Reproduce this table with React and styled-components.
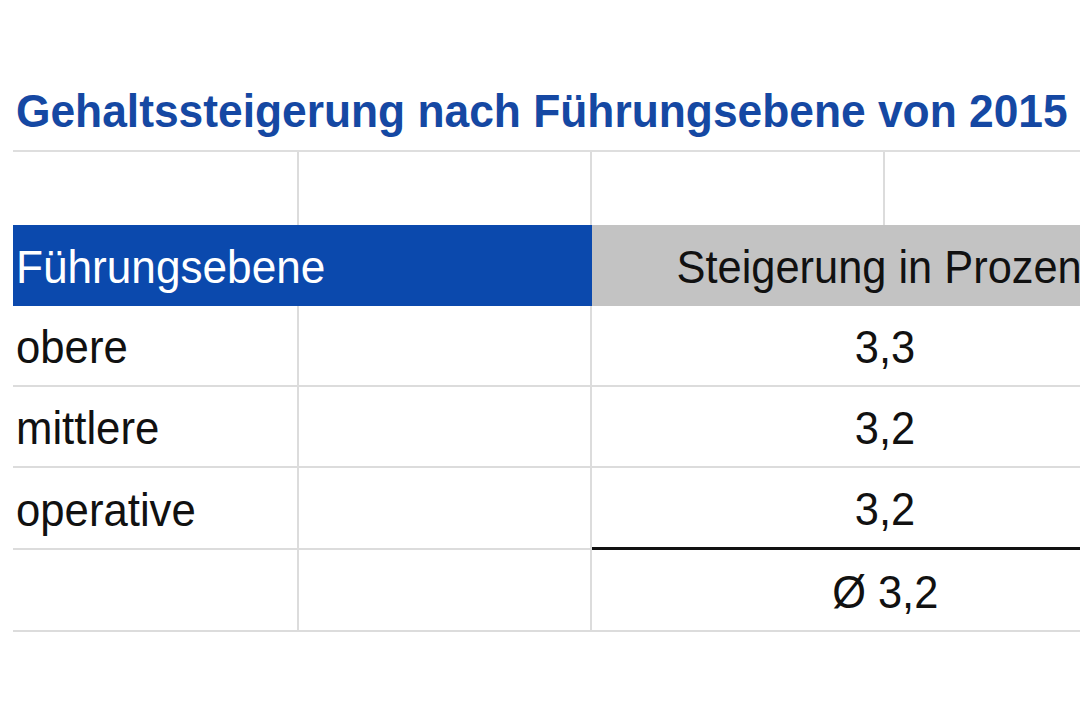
import React from "react";
import styled, { createGlobalStyle } from "styled-components";

const Global = createGlobalStyle`
  html, body { margin: 0; padding: 0; background: #fff; overflow: hidden; }
  body { font-family: "Liberation Sans", Arial, sans-serif; }
`;

const Page = styled.div`
  width: 1080px;
  height: 720px;
  overflow: hidden;
  padding-left: 13px;
  box-sizing: border-box;
`;

const Title = styled.h1`
  margin: 85px 0 13px 0;
  height: 52px;
  font-size: 47px;
  line-height: 52px;
  font-weight: 700;
  color: #1548a3;
  white-space: nowrap;
  padding-left: 3px;
`;

const Squeeze = styled.span`
  display: inline-block;
  white-space: nowrap;
  transform: scaleX(${(p) => p.$s || 0.943});
  transform-origin: ${(p) => (p.$center ? "center" : "left")} center;
`;

const Sheet = styled.div`
  display: grid;
  grid-template-columns: 286px 293px 293px 293px;
  grid-template-rows: 73px 81px 81px 81px 82px 82px;
  border-top: 2px solid #dedede;
  width: 1165px;
`;

const Cell = styled.div`
  box-sizing: border-box;
  display: flex;
  align-items: center;
  justify-content: ${(p) => (p.$center ? "center" : "flex-start")};
  padding-left: ${(p) => (p.$center ? "0" : "3px")};
  padding-top: 3px;
  grid-column: span ${(p) => p.$span || 1};
  font-size: 46px;
  color: #111;
  white-space: nowrap;
  border-right: ${(p) => (p.$noRight ? "none" : "2px solid #dcdcdc")};
  border-bottom: ${(p) =>
    p.$total ? "3px solid #111" : p.$noBottom ? "none" : "2px solid #dcdcdc"};
`;

const HeadCell = styled.div`
  box-sizing: border-box;
  display: flex;
  align-items: center;
  justify-content: ${(p) => (p.$center ? "center" : "flex-start")};
  padding-left: ${(p) => (p.$center ? "0" : "3px")};
  padding-top: 2px;
  grid-column: span 2;
  font-size: 46px;
  white-space: nowrap;
  background: ${(p) => (p.$variant === "blue" ? "#0b49ad" : "#c3c3c3")};
  color: ${(p) => (p.$variant === "blue" ? "#fff" : "#111")};
`;

const rows = [
  { label: "obere", value: "3,3" },
  { label: "mittlere", value: "3,2" },
  { label: "operative", value: "3,2", total: true },
];

export default function App() {
  return (
    <>
      <Global />
      <Page>
        <Title>
          <Squeeze>Gehaltssteigerung nach Führungsebene von 2015</Squeeze>
        </Title>
        <Sheet>
          <Cell $noBottom />
          <Cell $noBottom />
          <Cell $noBottom />
          <Cell $noBottom $noRight />

          <HeadCell $variant="blue">
            <Squeeze $s={0.96}>Führungsebene</Squeeze>
          </HeadCell>
          <HeadCell $variant="grey" $center>
            <Squeeze $center>Steigerung in Prozent</Squeeze>
          </HeadCell>

          {rows.map((r) => (
            <React.Fragment key={r.label}>
              <Cell>
                <Squeeze $s={0.95}>{r.label}</Squeeze>
              </Cell>
              <Cell />
              <Cell $span={2} $center $noRight $total={r.total}>
                <Squeeze $center>{r.value}</Squeeze>
              </Cell>
            </React.Fragment>
          ))}

          <Cell />
          <Cell />
          <Cell $span={2} $center $noRight>
            <Squeeze $center>Ø 3,2</Squeeze>
          </Cell>
        </Sheet>
      </Page>
    </>
  );
}
